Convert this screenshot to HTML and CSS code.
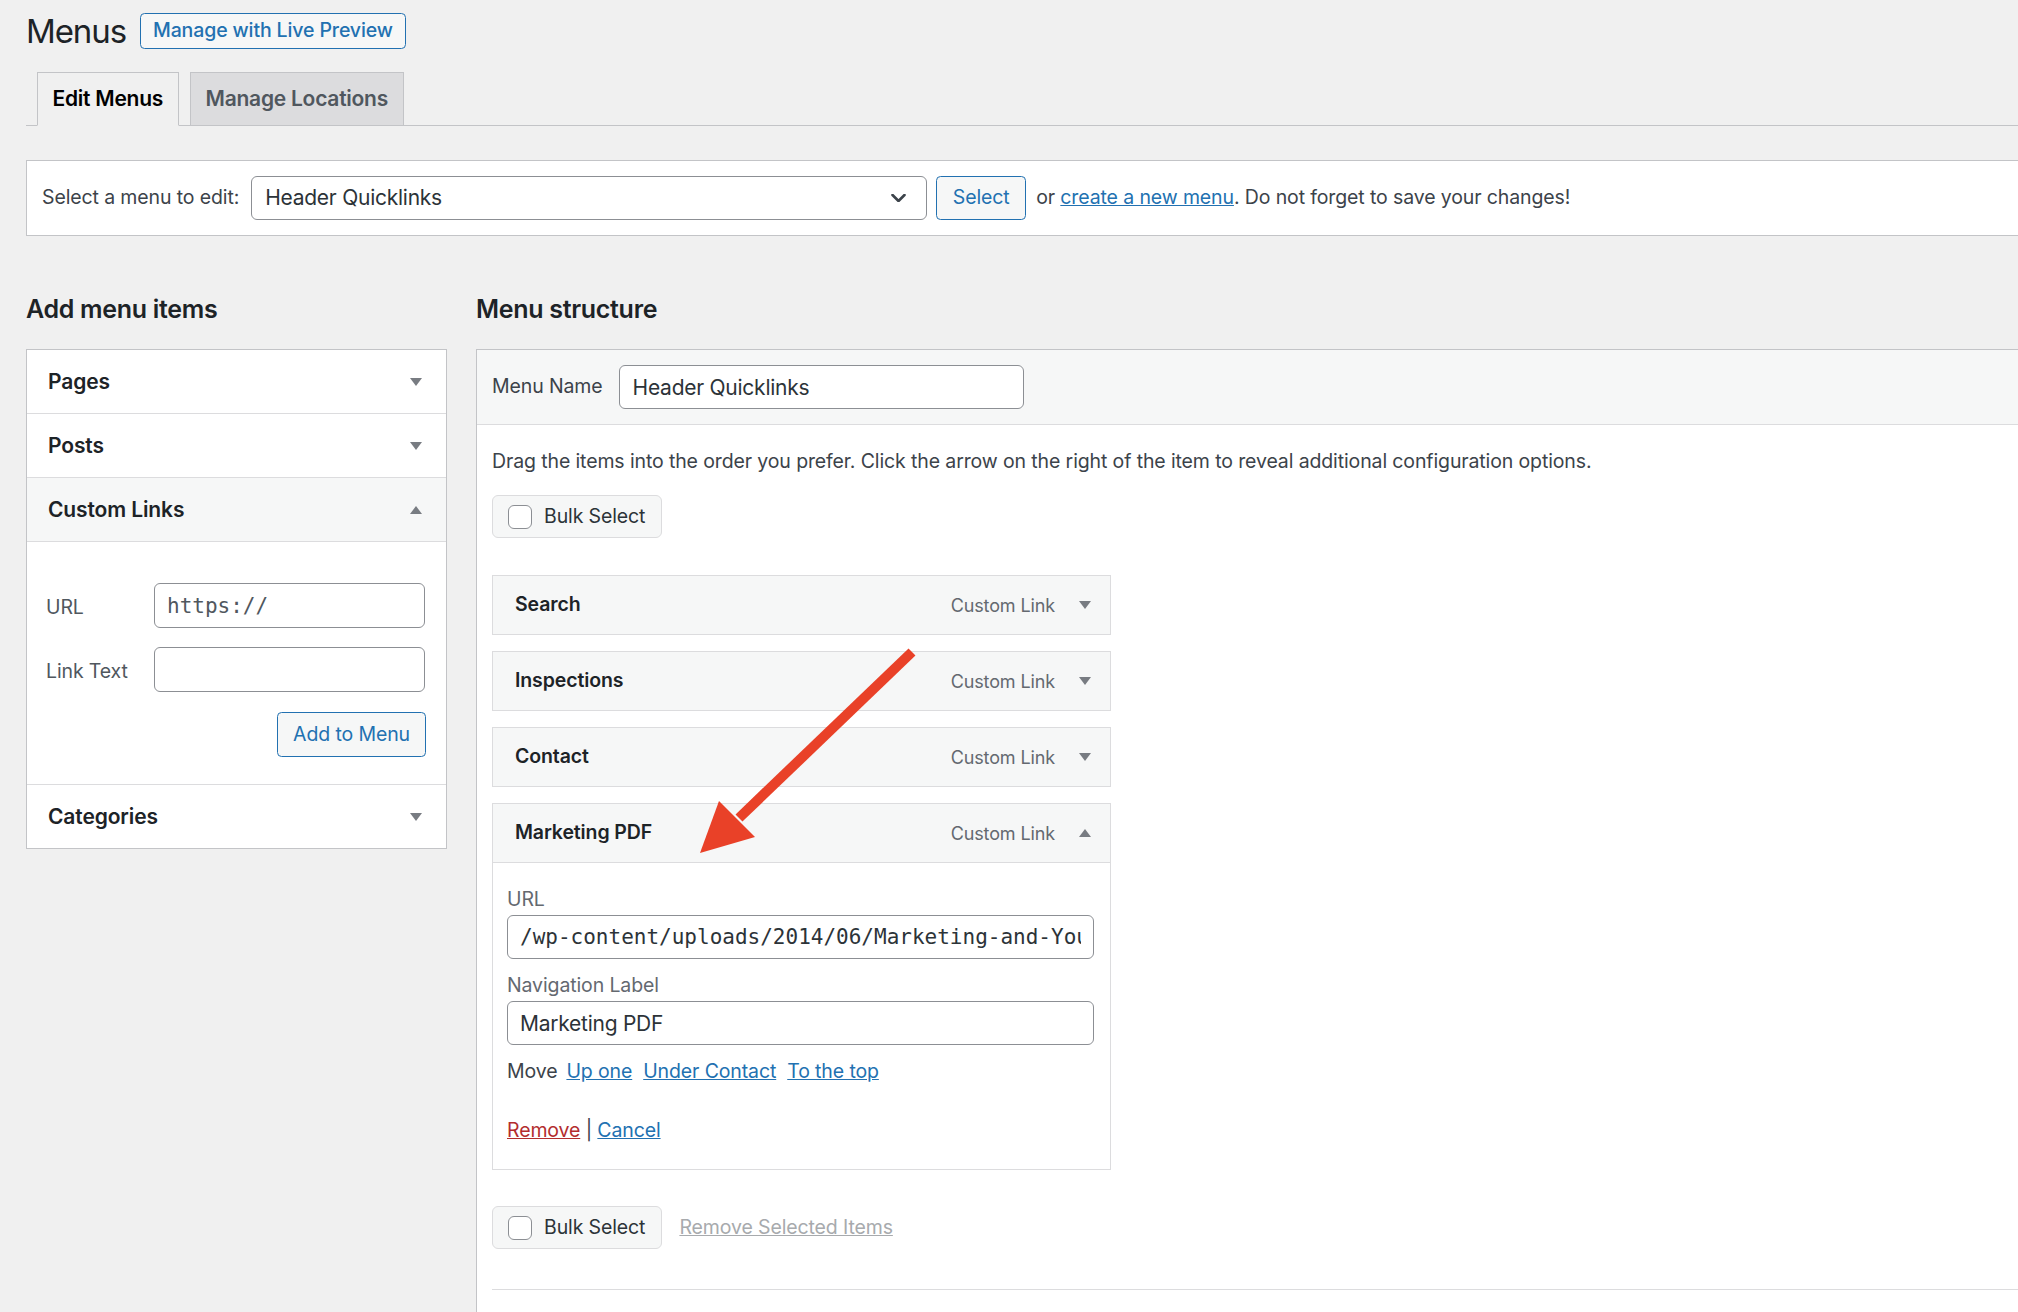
FILE: index.html
```html
<!DOCTYPE html>
<html lang="en">
<head>
<meta charset="utf-8">
<title>Menus</title>
<link rel="stylesheet" href="styles.css">
</head>
<body>
<div class="wrap">
  <div class="title-row">
    <h1>Menus</h1>
    <a class="title-action" href="#">Manage with Live Preview</a>
  </div>

  <nav class="tabs">
    <a class="tab tab-active" href="#">Edit Menus</a>
    <a class="tab" href="#">Manage Locations</a>
  </nav>

  <div class="manage-menus">
    <span class="manage-label">Select a menu to edit:</span>
    <div class="select-box">
      <span>Header Quicklinks</span>
      <svg class="chevron" width="15" height="8" viewBox="0 0 15 8"><polyline points="1.5,1 7.5,7 13.5,1" fill="none" stroke="#3c434a" stroke-width="2.6" stroke-linecap="round" stroke-linejoin="round"/></svg>
    </div>
    <a class="btn btn-select" href="#">Select</a>
    <span class="manage-note">or <a href="#">create a new menu</a>. Do not forget to save your changes!</span>
  </div>

  <div class="columns">
    <div class="settings-col">
      <h2>Add menu items</h2>
      <div class="accordion">
        <div class="acc-title">Pages<svg class="tri" width="12" height="8" viewBox="0 0 12 8"><polygon points="0,0 12,0 6,8"/></svg></div>
        <div class="acc-title">Posts<svg class="tri" width="12" height="8" viewBox="0 0 12 8"><polygon points="0,0 12,0 6,8"/></svg></div>
        <div class="acc-title acc-open">Custom Links<svg class="tri" width="12" height="8" viewBox="0 0 12 8"><polygon points="0,8 12,8 6,0"/></svg></div>
        <div class="acc-content">
          <div class="field-row">
            <label class="field-label">URL</label>
            <input class="text-input code" type="text" value="https://">
          </div>
          <div class="field-row">
            <label class="field-label">Link Text</label>
            <input class="text-input" type="text" value="">
          </div>
          <div class="button-row">
            <a class="btn btn-add" href="#">Add to Menu</a>
          </div>
        </div>
        <div class="acc-title acc-last">Categories<svg class="tri" width="12" height="8" viewBox="0 0 12 8"><polygon points="0,0 12,0 6,8"/></svg></div>
      </div>
    </div>

    <div class="management-col">
      <h2>Menu structure</h2>
      <div class="menu-edit">
        <div class="menu-header">
          <label class="menu-name-label">Menu Name</label>
          <input class="text-input menu-name" type="text" value="Header Quicklinks">
        </div>
        <div class="menu-body">
          <p class="drag-note">Drag the items into the order you prefer. Click the arrow on the right of the item to reveal additional configuration options.</p>
          <label class="bulk-select"><span class="checkbox"></span>Bulk Select</label>

          <ul class="menu-items">
            <li class="menu-item">
              <div class="item-bar"><span class="item-title">Search</span><span class="item-controls"><span class="item-type">Custom Link</span><svg class="tri" width="12" height="8" viewBox="0 0 12 8"><polygon points="0,0 12,0 6,8"/></svg></span></div>
            </li>
            <li class="menu-item">
              <div class="item-bar"><span class="item-title">Inspections</span><span class="item-controls"><span class="item-type">Custom Link</span><svg class="tri" width="12" height="8" viewBox="0 0 12 8"><polygon points="0,0 12,0 6,8"/></svg></span></div>
            </li>
            <li class="menu-item">
              <div class="item-bar"><span class="item-title">Contact</span><span class="item-controls"><span class="item-type">Custom Link</span><svg class="tri" width="12" height="8" viewBox="0 0 12 8"><polygon points="0,0 12,0 6,8"/></svg></span></div>
            </li>
            <li class="menu-item">
              <div class="item-bar"><span class="item-title">Marketing PDF</span><span class="item-controls"><span class="item-type">Custom Link</span><svg class="tri" width="12" height="8" viewBox="0 0 12 8"><polygon points="0,8 12,8 6,0"/></svg></span></div>
              <div class="item-settings">
                <label class="setting-label">URL</label>
                <input class="text-input code wide" type="text" value="/wp-content/uploads/2014/06/Marketing-and-You.pdf">
                <label class="setting-label spaced">Navigation Label</label>
                <input class="text-input wide" type="text" value="Marketing PDF">
                <div class="move-row">
                  <span class="move-label">Move</span>
                  <a href="#">Up one</a>
                  <a href="#">Under Contact</a>
                  <a href="#">To the top</a>
                </div>
                <div class="actions-row"><a class="remove-link" href="#">Remove</a> | <a href="#">Cancel</a></div>
              </div>
            </li>
          </ul>

          <div class="bulk-row">
            <label class="bulk-select"><span class="checkbox"></span>Bulk Select</label>
            <a class="remove-selected" href="#">Remove Selected Items</a>
          </div>

          <div class="menu-settings"></div>
        </div>
      </div>
    </div>
  </div>
</div>

<svg class="annotation" width="2018" height="1312" viewBox="0 0 2018 1312">
  <line x1="912" y1="652" x2="739" y2="818" stroke="#e94128" stroke-width="10"/>
  <polygon points="700,853 719,801 755,837" fill="#e94128"/>
</svg>
</body>
</html>
```

FILE: styles.css
```css
* {
  box-sizing: border-box;
}

html {
  height: 100%;
  overflow: hidden;
  background: #f0f0f0;
}

body {
  margin: 0;
  font-family: Inter, "Noto Sans", "Liberation Sans", sans-serif;
  font-size: 19.5px;
  line-height: 1.5;
  letter-spacing: -0.12px;
  color: #3c434a;
  background: #f0f0f0;
  position: relative;
}

a {
  color: #2271b1;
}

/* page wrapper — panels run past the right edge of the window */
.wrap {
  padding-left: 26px;
  margin-right: -60px;
}

/* heading row */
.title-row {
  display: flex;
  align-items: center;
  height: 36px;
  margin-top: 13px;
}

.title-row h1 {
  margin: 0;
  font-size: 33px;
  font-weight: 400;
  line-height: 36px;
  letter-spacing: -1.1px;
  color: #1d2327;
}

.title-action {
  margin-left: 14px;
  height: 36px;
  padding: 0 12px;
  display: flex;
  align-items: center;
  border: 1px solid #2271b1;
  border-radius: 4.5px;
  background: #f6f7f7;
  color: #2271b1;
  font-weight: 500;
  text-decoration: none;
}

/* tabs */
.tabs {
  display: flex;
  align-items: flex-end;
  height: 54px;
  margin-top: 23px;
  border-bottom: 1px solid #c3c4c7;
}

.tab {
  height: 54px;
  margin: 0 0 -1px 10.5px;
  padding: 0 15px;
  display: flex;
  align-items: center;
  border: 1px solid #c3c4c7;
  background: #dcdcde;
  color: #50575e;
  font-size: 21px;
  font-weight: 600;
  letter-spacing: -0.25px;
  text-decoration: none;
}

.tab-active {
  background: #f0f0f0;
  border-bottom-color: #f0f0f0;
  color: #000;
}

/* menu picker bar */
.manage-menus {
  margin-top: 34px;
  height: 76px;
  padding: 0 15px;
  display: flex;
  align-items: center;
  background: #fff;
  border: 1px solid #c3c4c7;
  white-space: nowrap;
}

.manage-label {
  margin-right: 12px;
}

.select-box {
  width: 676px;
  height: 44px;
  padding: 0 13px;
  display: flex;
  align-items: center;
  justify-content: space-between;
  border: 1px solid #8c8f94;
  border-radius: 6px;
  font-size: 21px;
  letter-spacing: -0.25px;
  color: #2c3338;
}

.chevron {
  margin-right: 7px;
}

.btn {
  height: 44px;
  display: flex;
  align-items: center;
  justify-content: center;
  border: 1px solid #2271b1;
  border-radius: 4.5px;
  background: #f6f7f7;
  color: #2271b1;
  text-decoration: none;
}

.btn-select {
  width: 90px;
  margin-left: 9px;
}

.manage-note {
  margin-left: 10px;
}

/* two columns */
.columns {
  display: flex;
  align-items: flex-start;
  margin-top: 55px;
}

.columns h2 {
  margin: 0 0 22px;
  font-size: 25px;
  font-weight: 600;
  line-height: 36px;
  letter-spacing: -0.3px;
  color: #1d2327;
}

.settings-col {
  width: 421px;
  flex: none;
}

.management-col {
  flex: 1;
  margin-left: 29px;
}

/* accordion of item sources */
.accordion {
  background: #fff;
  border: 1px solid #c3c4c7;
}

.acc-title {
  height: 64px;
  padding: 0 24px 0 21px;
  display: flex;
  align-items: center;
  justify-content: space-between;
  border-bottom: 1px solid #dcdcde;
  font-size: 21px;
  font-weight: 600;
  color: #1d2327;
}

.acc-open {
  background: #f6f7f7;
}

.acc-last {
  height: 63px;
  border-bottom: none;
}

.tri {
  flex: none;
  fill: #787c82;
}

.acc-content {
  padding: 41px 20px 27px 19px;
  border-bottom: 1px solid #dcdcde;
}

.field-row {
  display: flex;
  align-items: center;
  margin-bottom: 19px;
}

.field-label {
  width: 108px;
  flex: none;
  padding-top: 4px;
  color: #50575e;
}

.text-input {
  height: 45px;
  width: 271px;
  padding: 0 12px;
  border: 1px solid #8c8f94;
  border-radius: 6px;
  background: #fff;
  font-family: Inter, "Noto Sans", "Liberation Sans", sans-serif;
  font-size: 21px;
  letter-spacing: -0.25px;
  color: #2c3338;
  outline: none;
}

.text-input.code {
  font-family: "DejaVu Sans Mono", "Liberation Mono", monospace;
  letter-spacing: 0;
  color: #50575e;
}

.button-row {
  display: flex;
  justify-content: flex-end;
  margin-top: 20px;
}

.btn-add {
  width: 149px;
  height: 45px;
}

/* menu structure panel */
.menu-edit {
  min-height: 1000px;
  background: #fff;
  border-top: 1px solid #c3c4c7;
  border-left: 1px solid #c3c4c7;
}

.menu-header {
  height: 75px;
  padding: 0 15px;
  display: flex;
  align-items: center;
  background: #f6f7f7;
  border-bottom: 1px solid #dcdcde;
}

.menu-name-label {
  margin-right: 16px;
}

.menu-name {
  width: 405px;
  height: 44px;
  padding: 0 13px;
}

.menu-body {
  padding: 0 15px;
}

.drag-note {
  margin: 22px 0 19px;
  line-height: 29px;
}

.bulk-select {
  height: 43px;
  padding: 0 16px 0 15px;
  display: inline-flex;
  align-items: center;
  border: 1px solid #dcdcde;
  border-radius: 6px;
  background: #f6f7f7;
  color: #2c3338;
}

.checkbox {
  width: 24px;
  height: 24px;
  margin-right: 12px;
  border: 1px solid #8c8f94;
  border-radius: 6px;
  background: #fff;
}

.menu-items {
  list-style: none;
  margin: 37px 0 0;
  padding: 0;
  width: 619px;
}

.menu-item + .menu-item {
  margin-top: 16px;
}

.item-bar {
  height: 60px;
  padding: 0 19px 0 22px;
  display: flex;
  align-items: center;
  justify-content: space-between;
  border: 1px solid #dcdcde;
  background: #f6f7f7;
}

.item-title {
  font-weight: 600;
  color: #1d2327;
}

.item-controls {
  display: flex;
  align-items: center;
}

.item-type {
  margin-right: 24px;
  font-size: 18px;
  color: #646970;
}

.item-settings {
  padding: 22px 16px 24px 14px;
  border: 1px solid #dcdcde;
  border-top: none;
  background: #fff;
}

.setting-label {
  display: block;
  line-height: 29px;
  margin-bottom: 1px;
  color: #646970;
}

.setting-label.spaced {
  margin-top: 12px;
}

.text-input.wide {
  display: block;
  width: 100%;
  height: 44px;
}

.text-input.code.wide {
  color: #2c3338;
}

.move-row {
  margin-top: 12px;
  line-height: 29px;
  display: flex;
  gap: 11px;
}

.move-label {
  margin-right: -2px;
}

.actions-row {
  margin-top: 30px;
  line-height: 29px;
  white-space: pre;
}

.actions-row .remove-link {
  color: #b32d2e;
}

.bulk-row {
  margin-top: 36px;
  display: flex;
  align-items: center;
}

.remove-selected {
  margin-left: 17px;
  color: #a7aaad;
}

.menu-settings {
  margin-top: 40px;
  height: 60px;
  border-top: 1px solid #dcdcde;
}

/* red call-out arrow drawn over the page */
.annotation {
  position: absolute;
  top: 0;
  left: 0;
  pointer-events: none;
}
```
